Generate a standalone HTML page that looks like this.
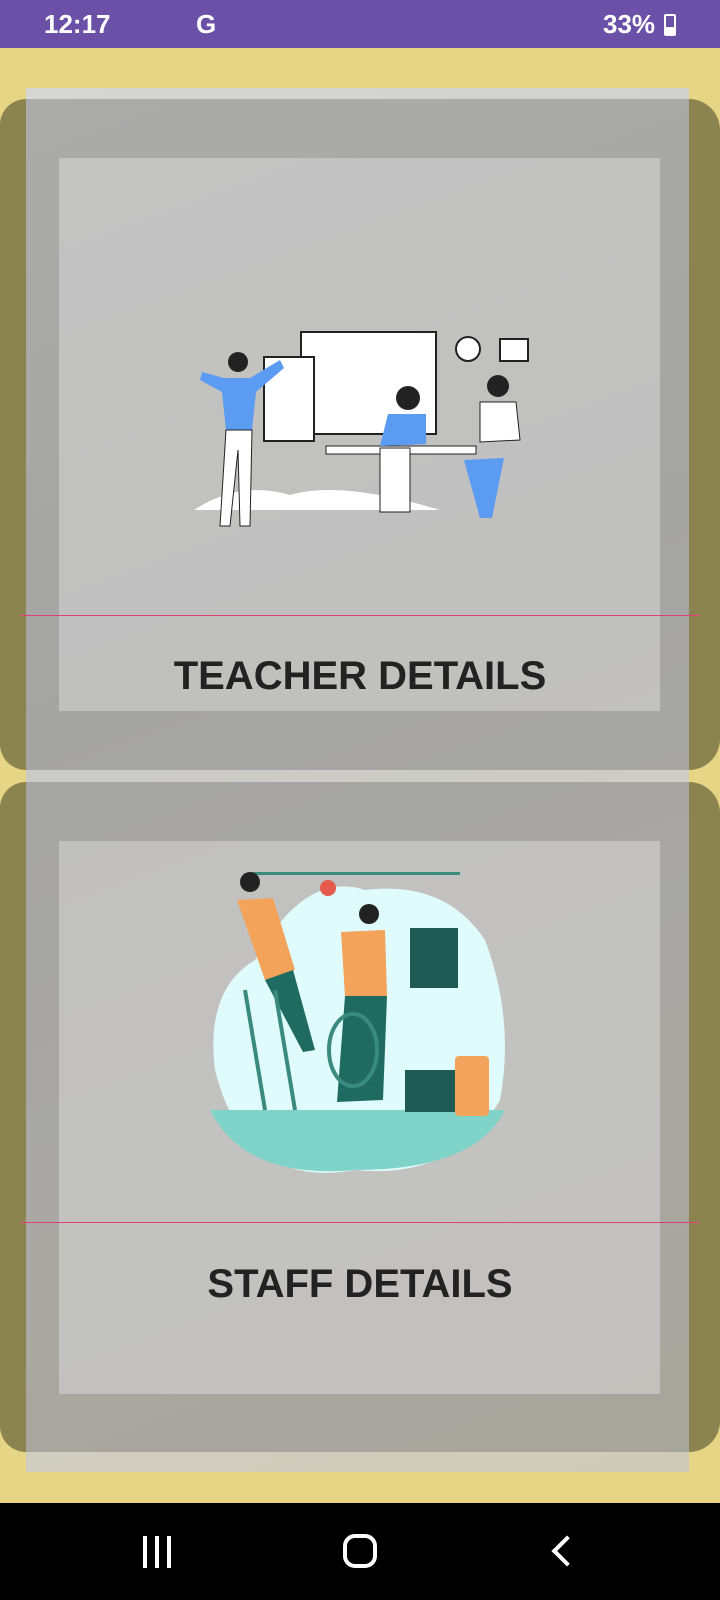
<!DOCTYPE html>
<html><head><meta charset="utf-8"><style>
*{margin:0;padding:0;box-sizing:border-box}
body{width:720px;height:1600px;background:#e5d585;position:relative;overflow:hidden;font-family:"Liberation Sans",sans-serif}
.sb{position:absolute;left:0;top:0;width:720px;height:48px;background:#6a50a7;color:#fff;font-size:26px;font-weight:bold}
.panel{position:absolute;left:26px;top:88px;width:663px;height:1384px;background:linear-gradient(160deg,#d6d6d4,#c9c9c6 40%,#d2d0c8 70%,#cfcbb8)}
.card{position:absolute;left:0;width:720px;border-radius:46px;background:rgba(120,120,120,.45)}
.card.y{background:rgba(125,118,60,.0)}
.inner{position:absolute;left:59px;width:601px;background:rgba(215,215,215,.55)}
.line{position:absolute;left:20px;width:680px;height:1px;background:#e0407a}
.t{position:absolute;left:0;width:720px;text-align:center;font-size:40px;font-weight:bold;color:#222}
.edge{position:absolute;background:#8b8350}
.nav{position:absolute;left:0;top:1503px;width:720px;height:97px;background:#000}
</style></head><body>
<div class="sb"><span style="position:absolute;left:44px;top:9px">12:17</span><span style="position:absolute;left:196px;top:9px">G</span><span style="position:absolute;left:603px;top:9px">33%</span>
<div style="position:absolute;left:664px;top:14px;width:12px;height:22px;border:2px solid #fff;border-radius:2px;background:linear-gradient(#6a50a7 60%,#fff 60%)"></div></div>
<div class="panel"></div>
<!-- yellow-area edges of cards -->
<div class="edge" style="left:0;top:99px;width:26px;height:671px;border-radius:46px 0 0 46px"></div>
<div class="edge" style="left:689px;top:99px;width:31px;height:671px;border-radius:0 46px 46px 0"></div>
<div class="edge" style="left:0;top:782px;width:26px;height:670px;border-radius:46px 0 0 46px"></div>
<div class="edge" style="left:689px;top:782px;width:31px;height:670px;border-radius:0 46px 46px 0"></div>
<div class="card" style="top:99px;height:671px;left:26px;width:663px;border-radius:0"></div>
<div class="card" style="top:782px;height:670px;left:26px;width:663px;border-radius:0"></div>
<div class="inner" style="top:158px;height:553px"></div>
<div class="inner" style="top:841px;height:553px"></div>
<div class="line" style="top:615px"></div>
<div class="line" style="top:1222px"></div>
<div class="t" style="top:654px">TEACHER DETAILS</div>
<div class="t" style="top:1262px">STAFF DETAILS</div>
<svg style="position:absolute;left:180px;top:330px" width="365" height="205">
<path d="M14 180 Q60 150 110 165 Q160 150 260 180 Z" fill="#fff"/>
<rect x="121" y="2" width="135" height="102" fill="#fff" stroke="#222" stroke-width="2"/>
<rect x="84" y="27" width="50" height="84" fill="#fff" stroke="#222" stroke-width="2"/>
<circle cx="288" cy="19" r="12" fill="#fff" stroke="#222" stroke-width="2"/>
<rect x="320" y="9" width="28" height="22" fill="#fff" stroke="#222" stroke-width="2"/>
<circle cx="58" cy="32" r="10" fill="#222"/>
<path d="M44 48 L70 48 L100 30 L104 38 L76 62 L72 100 L46 100 L42 62 L20 50 L22 42Z" fill="#5b9bf2"/>
<path d="M46 100 L72 100 L70 196 L60 196 L58 120 L50 196 L40 196Z" fill="#fff" stroke="#222"/>
<rect x="146" y="116" width="150" height="8" fill="#fff" stroke="#222"/>
<circle cx="228" cy="68" r="12" fill="#222"/>
<path d="M208 84 L246 84 L246 114 L200 116Z" fill="#5b9bf2"/>
<circle cx="318" cy="56" r="11" fill="#222"/>
<path d="M300 72 L336 72 L340 110 L300 112Z" fill="#fff" stroke="#222"/>
<path d="M284 130 L324 128 L312 188 L300 188Z" fill="#5b9bf2"/>
<rect x="200" y="118" width="30" height="64" fill="#fff" stroke="#222"/>
</svg>
<svg style="position:absolute;left:205px;top:870px" width="320" height="325">
<path d="M10 200 Q0 120 50 90 Q100 0 160 20 Q240 10 280 70 Q310 150 295 230 Q250 310 150 300 Q40 320 10 200Z" fill="#e0fbfb"/>
<path d="M5 240 L300 240 Q270 300 150 300 Q40 310 5 240Z" fill="#7fd3c9"/>
<rect x="45" y="2" width="210" height="3" fill="#3a8a7e"/>
<circle cx="123" cy="18" r="8" fill="#e45a4c"/>
<rect x="205" y="58" width="48" height="60" fill="#1f5a55"/>
<rect x="200" y="200" width="55" height="42" fill="#1f5a55"/>
<rect x="250" y="186" width="34" height="60" rx="4" fill="#f3a35a"/>
<circle cx="45" cy="12" r="10" fill="#222"/><path d="M32 30 L68 28 L90 100 L60 110Z" fill="#f3a35a"/>
<path d="M60 110 L88 100 L110 180 L98 182Z" fill="#1f6b62"/>
<path d="M40 120 L60 240 M70 120 L90 240" stroke="#3a8a7e" stroke-width="4"/>
<circle cx="164" cy="44" r="10" fill="#222"/><path d="M136 62 L180 60 L182 126 L140 126Z" fill="#f3a35a"/>
<path d="M140 126 L182 126 L178 230 L132 232Z" fill="#1f6b62"/>
<ellipse cx="148" cy="180" rx="24" ry="36" fill="none" stroke="#3a8a7e" stroke-width="4"/>
</svg>
<div class="nav">
<div style="position:absolute;left:143px;top:33px;width:4px;height:32px;background:#fff;box-shadow:12px 0 #fff,24px 0 #fff"></div>
<div style="position:absolute;left:343px;top:31px;width:34px;height:34px;border:4px solid #fff;border-radius:12px"></div>
<div style="position:absolute;left:556px;top:37px;width:22px;height:22px;border-left:4px solid #fff;border-bottom:4px solid #fff;transform:rotate(45deg)"></div>
</div>
</body></html>
